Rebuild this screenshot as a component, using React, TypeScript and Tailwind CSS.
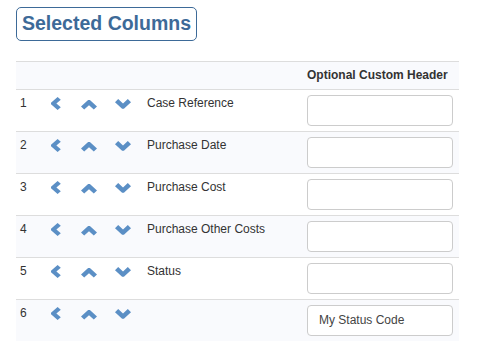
import React from "react";

const BLUE = "#5b8fc5";

function Left() {
  return (
    <svg width="10" height="13" viewBox="0 0 10 13" className="mt-[7px] shrink-0">
      <polygon points="6.6,0 0,5.8 0,7.2 6.6,13 9.8,10.2 5.4,6.5 9.8,2.8" fill={BLUE} />
    </svg>
  );
}
function Up() {
  return (
    <svg width="16" height="10" viewBox="0 0 16 10" className="mt-[10px] shrink-0">
      <polygon points="0,6.6 7.1,0 8.9,0 16,6.6 12.8,9.6 8,5.3 3.2,9.6" fill={BLUE} />
    </svg>
  );
}
function Down() {
  return (
    <svg width="16" height="10" viewBox="0 0 16 10" className="mt-[9px] shrink-0">
      <polygon points="0,3.2 3.2,0 8,4.4 12.8,0 16,3.2 8.9,9.8 7.1,9.8" fill={BLUE} />
    </svg>
  );
}

const rows = [
  { n: 1, label: "Case Reference", value: "" },
  { n: 2, label: "Purchase Date", value: "" },
  { n: 3, label: "Purchase Cost", value: "" },
  { n: 4, label: "Purchase Other Costs", value: "" },
  { n: 5, label: "Status", value: "" },
  { n: 6, label: "", value: "My Status Code" },
];

export default function App() {
  return (
    <div
      className="w-[477px] h-[355px] bg-white text-[#333333] text-[12px] leading-[17px]"
      style={{ fontFamily: '"Liberation Sans", Arial, Helvetica, sans-serif' }}
    >
      <div className="pt-[7px] pl-[16px]">
        <div className="inline-block border border-[#3d6a98] rounded-[5px] pl-[5px] pr-[5px] h-[34px] leading-[31px] text-[19.5px] font-bold text-[#3d6a98]">
          Selected Columns
        </div>
      </div>
      <div className="mt-[20px] ml-[16px] w-[443px]">
        <div className="flex border-t border-[#dddddd] bg-[#f9fafd] pt-[5px] pb-[5px]">
          <div className="ml-auto w-[152px] font-bold">Optional Custom Header</div>
        </div>
        {rows.map((r, i) => (
          <div
            key={r.n}
            className={`flex items-start h-[42px] border-t border-[#dddddd] ${i % 2 === 1 ? "bg-[#f9fafd]" : "bg-white"}`}
          >
            <div className="w-[35px] pl-[4px] pt-[5px] shrink-0">{r.n}</div>
            <Left />
            <div className="ml-[20px] flex">
              <Up />
            </div>
            <div className="ml-[18px] flex">
              <Down />
            </div>
            <div className="ml-[16px] pt-[5px]">{r.label}</div>
            <div className="ml-auto pr-[6px] pt-[5px]">
              <div className="w-[146px] h-[31px] border border-[#cccccc] rounded-[4px] bg-white pl-[11px] leading-[29px] text-[12px] text-[#444]">
                {r.value}
              </div>
            </div>
          </div>
        ))}
      </div>
    </div>
  );
}
